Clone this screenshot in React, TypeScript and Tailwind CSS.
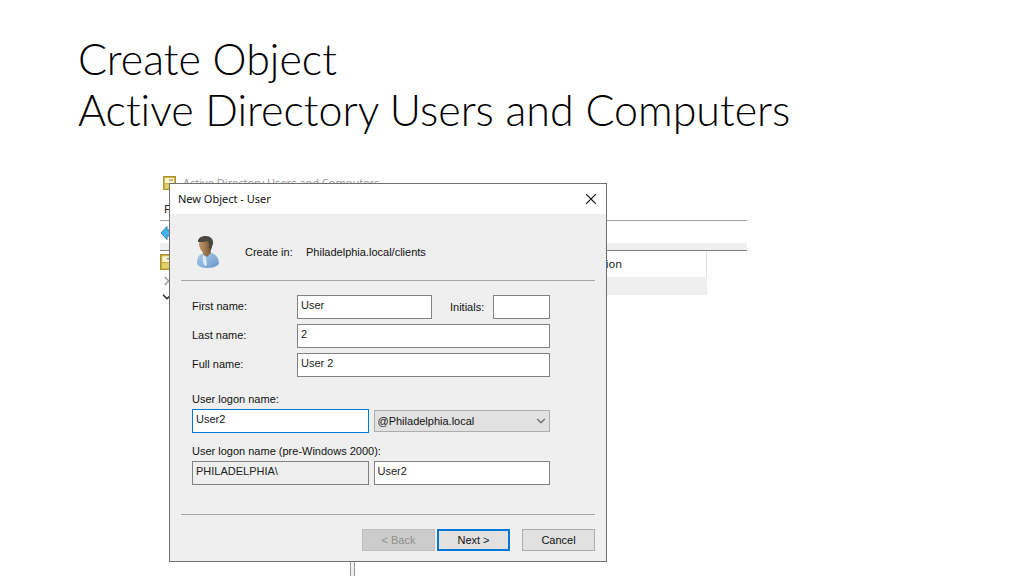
import React from "react";
import { ChevronDown, ChevronRight, X } from "lucide-react";
import { twMerge } from "tailwind-merge";

const suffixes = ["@Philadelphia.local"];

function ConsoleIcon({ className }: { className?: string }) {
    return (
        <svg viewBox="0 0 14 14" className={twMerge("w-3.5 h-3.5 flex-shrink-0", className)}>
            <rect x="0.5" y="0.5" width="12" height="13" fill="#d0b63f" stroke="#a8913a" />
            <rect x="2" y="2" width="9" height="5" fill="#fbf6d3" />
            <rect x="6" y="3.5" width="4" height="1.2" fill="#a8913a" />
            <rect x="2" y="8" width="9" height="4.5" fill="#e3cf6b" />
        </svg>
    );
}

function BackArrow() {
    return (
        <svg viewBox="0 0 18 16" className="w-[18px] h-4">
            <path d="M1 8l6-6.5v3.5h10v6h-10v3.5z" fill="#45b3ee" stroke="#2a7fb8" strokeWidth="1" strokeLinejoin="round" />
        </svg>
    );
}

function UserIcon() {
    return (
        <svg viewBox="0 0 24 32" className="w-6 h-8 flex-shrink-0">
            <defs>
                <linearGradient id="shirt" x1="0" y1="0" x2="1" y2="1">
                    <stop offset="0" stopColor="#a9c9ea" />
                    <stop offset="0.5" stopColor="#8bb4de" />
                    <stop offset="1" stopColor="#6a96c8" />
                </linearGradient>
                <linearGradient id="face" x1="0" y1="0" x2="1" y2="0">
                    <stop offset="0" stopColor="#c0976b" />
                    <stop offset="0.5" stopColor="#a07850" />
                    <stop offset="1" stopColor="#5e4429" />
                </linearGradient>
            </defs>
            <path d="M1 28c0-5 1-9 5-10l5-2 5 1c5 2 7 6 7 11-3 3-7 4-11 4-5 0-9-1-11-4z" fill="url(#shirt)" />
            <path d="M7 19l3 2 1 8-2 1c-2-2-3-7-2-11z" fill="#d9e8f6" />
            <path d="M7 13h7l1 4-4 4-4-3z" fill="#94704a" />
            <path d="M3 7c0-3 2-5 6-5 3 0 7 2 7 6 0 5-2 10-6 10-4-1-7-6-7-11z" fill="url(#face)" />
            <path d="M2 6c0-4 3-6 8-6 4 0 8 3 7 8l-2 5-2-1c1-3 0-5-1-7-2 1-7 1-10 1z" fill="#4a4640" />
        </svg>
    );
}

const fieldStyle = "h-6 min-w-0 bg-white border border-[#828282] px-[3px] pb-1 text-[#222] outline-none";
const buttonStyle = "w-[73px] h-[22px] border border-[#adadad] bg-[#e1e1e1] text-center";

function NewObjectDialog() {
    const [firstName, setFirstName] = React.useState("User");
    const [initials, setInitials] = React.useState("");
    const [lastName, setLastName] = React.useState("2");
    const [fullName, setFullName] = React.useState("User 2");
    const [logon, setLogon] = React.useState("User2");
    const [oldLogon, setOldLogon] = React.useState("User2");

    return (
        <div
            role="dialog"
            aria-labelledby="dialog-title"
            className="absolute left-[9px] top-[9px] w-[438px] border border-[#6e6e6e] bg-[#efefef] font-['Liberation_Sans',Arial,sans-serif] text-[11px] leading-4 text-[#111]"
        >
            <div className="h-[30px] pl-2 pr-1.5 flex items-center justify-between bg-white">
                <h2 id="dialog-title" className="font-['Noto_Sans','Open_Sans',sans-serif] text-[11px]">New Object - User</h2>
                <button type="button" aria-label="Close">
                    <X className="w-[18px] h-[18px] text-[#222]" strokeWidth={1.5} />
                </button>
            </div>
            <form className="px-[11px] pb-2.5" onSubmit={(e) => e.preventDefault()}>
                <div className="h-[67px] pt-[22px] pl-[15px] flex items-start border-b border-[#a5a5a5]">
                    <UserIcon />
                    <div className="pt-2 pl-[25px] flex">
                        <span className="w-[61px]">Create in:</span>
                        <span>Philadelphia.local/clients</span>
                    </div>
                </div>

                <div className="pl-[11px] pr-[45px] pt-3.5 pb-[29px] border-b border-[#a5a5a5]">
                    <div className="flex flex-col gap-[5px]">
                        <div className="flex items-center">
                            <label htmlFor="first" className="w-[105px] pb-0.5">First name:</label>
                            <input id="first" className={twMerge(fieldStyle, "w-[135px]")} value={firstName} onChange={(e) => setFirstName(e.target.value)} />
                            <label htmlFor="initials" className="flex-1 pl-[18px]">Initials:</label>
                            <input id="initials" className={twMerge(fieldStyle, "w-[57px]")} value={initials} onChange={(e) => setInitials(e.target.value)} />
                        </div>
                        <div className="flex items-center">
                            <label htmlFor="last" className="w-[105px] pb-0.5">Last name:</label>
                            <input id="last" className={twMerge(fieldStyle, "flex-1")} value={lastName} onChange={(e) => setLastName(e.target.value)} />
                        </div>
                        <div className="flex items-center">
                            <label htmlFor="full" className="w-[105px] pb-0.5">Full name:</label>
                            <input id="full" className={twMerge(fieldStyle, "flex-1")} value={fullName} onChange={(e) => setFullName(e.target.value)} />
                        </div>
                    </div>

                    <label htmlFor="logon" className="block mt-3.5 h-[18px]">User logon name:</label>
                    <div className="grid grid-cols-2 items-center gap-[5px]">
                        <input id="logon" className={twMerge(fieldStyle, "border-[#0078d7]")} value={logon} onChange={(e) => setLogon(e.target.value)} />
                        <div className="grid items-center">
                            <select aria-label="Domain suffix" className="col-start-1 row-start-1 h-[22px] w-full appearance-none bg-[#e1e1e1] border border-[#adadad] px-[3px] outline-none">
                                {suffixes.map((suffix) => (
                                    <option key={suffix}>{suffix}</option>
                                ))}
                            </select>
                            <ChevronDown className="col-start-1 row-start-1 justify-self-end mr-0.5 w-3.5 h-3.5 text-[#666] pointer-events-none" strokeWidth={2} />
                        </div>
                    </div>

                    <label htmlFor="old-logon" className="block mt-2.5 h-[18px]">User logon name (pre-Windows 2000):</label>
                    <div className="grid grid-cols-2 gap-[5px]">
                        <input aria-label="Domain" className={twMerge(fieldStyle, "bg-[#efefef]")} value={"PHILADELPHIA\\"} readOnly />
                        <input id="old-logon" className={fieldStyle} value={oldLogon} onChange={(e) => setOldLogon(e.target.value)} />
                    </div>
                </div>

                <div className="mt-3.5 flex justify-end">
                    <button type="button" disabled className={twMerge(buttonStyle, "bg-[#cccccc] border-[#bfbfbf] text-[#8d8d8d]")}>&lt; Back</button>
                    <button type="submit" className={twMerge(buttonStyle, "ml-0.5 border-2 border-[#0078d7]")}>Next &gt;</button>
                    <button type="button" className={twMerge(buttonStyle, "ml-3")}>Cancel</button>
                </div>
            </form>
        </div>
    );
}

export default function App() {
    return (
        <main className="min-h-screen flex flex-col bg-white overflow-hidden">
            <h1 className="pt-[33px] px-[78px] font-[Lato,'Open_Sans',sans-serif] font-light text-[43px] leading-[51px] text-black [font-variant-ligatures:none]">
                Create Object
                <br />
                Active Directory Users and Computers
            </h1>

            <section className="relative flex-1 flex flex-col mt-[39px] ml-40 w-full max-w-[587px] font-['Noto_Sans','Open_Sans',sans-serif] text-[11px] leading-4 text-[#222]">
                <div className="h-[18px] pl-[3px] flex items-center gap-1.5 text-[#999]">
                    <ConsoleIcon />
                    <span>Active Directory Users and Computers</span>
                </div>
                <div className="h-[29px] pl-1 pt-1.5 flex items-center border-b border-[#a0a0a0]">
                    <button type="button">F</button>
                </div>
                <div className="h-[30px] flex items-start border-b border-[#808080] bg-[linear-gradient(#fff_22px,#efefef_22px)]">
                    <button type="button" aria-label="Back" className="pt-1">
                        <BackArrow />
                    </button>
                </div>
                <div className="flex-1 flex">
                    <div className="w-[190px] pt-[3px]">
                        <ConsoleIcon className="w-4 h-4" />
                        <ChevronRight className="mt-1 w-3.5 h-3.5 text-[#a0a0a0]" strokeWidth={3} />
                        <ChevronDown className="mt-0.5 w-3.5 h-3.5 text-[#333]" strokeWidth={3} />
                    </div>
                    <div className="w-[5px] border-x border-[#999] bg-[#efefef]" />
                    <div className="w-[352px]">
                        <table className="w-full">
                            <thead>
                                <tr className="h-[26px]">
                                    <th scope="col" className="pr-[84px] text-right font-normal border-r border-[#e0e0e0]">Description</th>
                                </tr>
                            </thead>
                            <tbody>
                                <tr className="h-[18px] bg-[#efefef]">
                                    <td />
                                </tr>
                            </tbody>
                        </table>
                    </div>
                </div>
                <NewObjectDialog />
            </section>
        </main>
    );
}
